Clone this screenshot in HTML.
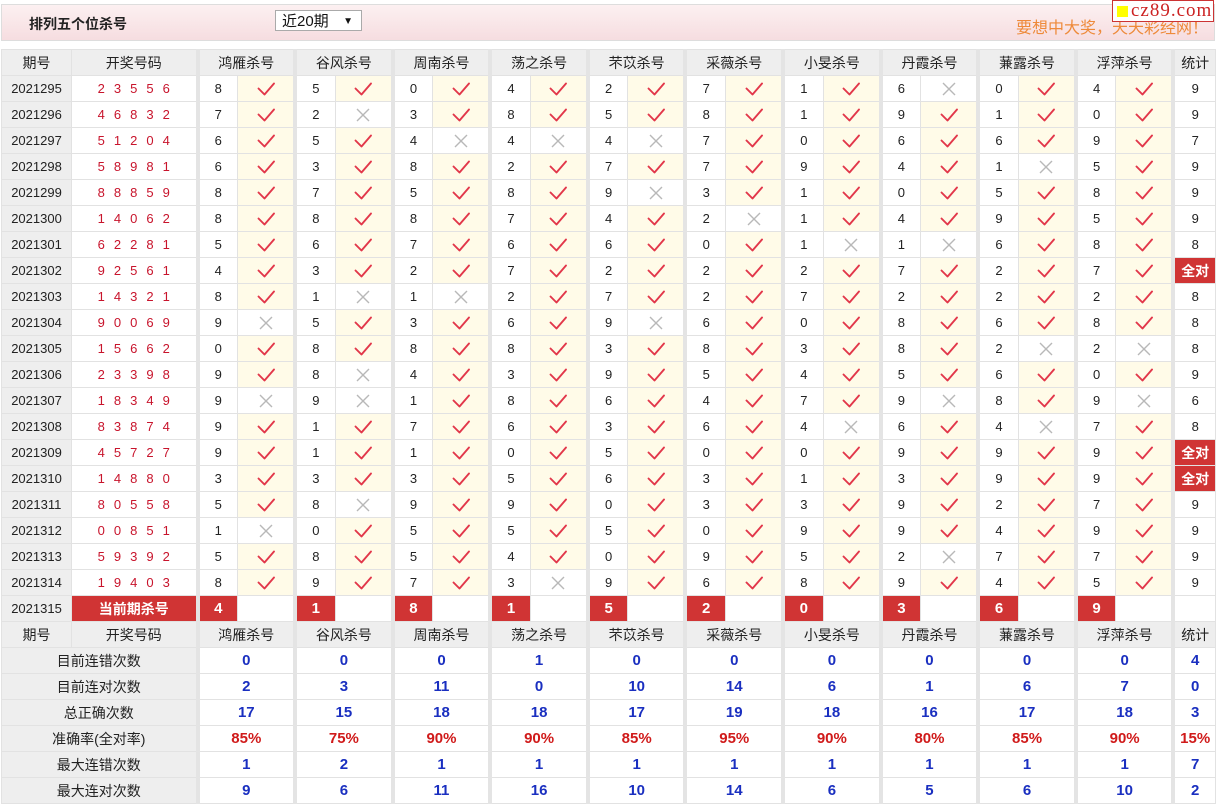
<!DOCTYPE html>
<html><head><meta charset="utf-8">
<style>
body{margin:0;width:1216px;height:807px;background:#fff;font-family:"Liberation Sans","Noto Sans CJK SC",sans-serif;position:relative;overflow:hidden}
.hd{position:absolute;left:1px;top:4px;width:1212px;height:35px;border:1px solid #ddd;background:linear-gradient(#fcf0f1,#f6dde0)}
.tt{position:absolute;left:27px;top:9px;font-size:14px;font-weight:bold;color:#222}
.sel{position:absolute;left:273px;top:5px;width:87px;height:21px;border:1px solid #aaa;background:#fff;font-size:15px;line-height:21px;box-sizing:border-box;padding-left:6px;color:#111}
.sel b{position:absolute;right:8px;top:0;font-size:10px}
.slog{position:absolute;right:6px;top:9px;font-size:16px;color:#ee8a3a}
.logo{position:absolute;left:1112px;top:0;width:102px;height:22px;background:#fff;border:1px solid #c33;box-sizing:border-box;font-family:"Liberation Serif",serif;font-size:19px;color:#c22;line-height:20px;padding-left:18px;letter-spacing:1px}
.logo i{position:absolute;left:4px;top:5px;width:11px;height:11px;background:#ff0}
table{position:absolute;left:1px;top:49px;border-collapse:collapse;table-layout:fixed;width:1214px;font-size:13px}
td{height:25px;border:1px solid #e2e2e2;text-align:center;padding:0;color:#222;white-space:nowrap;overflow:hidden}
.h td{background:#eee;font-size:14px}
.h td.g{border-left:4px solid #e4e4e4}
td.p{background:#eee;font-size:13px}
td.k{color:#c8142c;letter-spacing:9px;padding-left:9px;font-size:13px}
td.n{border-left:4px solid #e4e4e4}
td.y{background:#fffbe8}
td.s{border-left:4px solid #e4e4e4}
td.q{background:#d03434;color:#fff;font-weight:bold;font-size:14px}
td.c{background:#d03434;color:#fff;font-weight:bold;font-size:15px}
.st td{font-weight:bold;color:#1a2fc0;font-size:15px}
.st td.l{background:#eee;font-weight:normal;color:#222;font-size:14px;border-right:4px solid #e4e4e4}
.st td.r{color:#d01a1a}
svg.i{width:22px;height:18px;vertical-align:middle}
</style></head><body>
<svg width="0" height="0" style="position:absolute"><defs>
<symbol id="v" viewBox="0 0 22 18"><path d="M3.5 8.5 L9.5 14.5 L19 3.5" fill="none" stroke="#e2374a" stroke-width="1.9" stroke-linejoin="round" stroke-linecap="round"/></symbol>
<symbol id="x" viewBox="0 0 22 18"><path d="M5 3 L17 15 M17 3 L5 15" fill="none" stroke="#b8b8b8" stroke-width="1.4"/></symbol>
</defs></svg>
<div class="hd"><div class="tt">排列五个位杀号</div><div class="sel">近20期<b>▼</b></div><div class="slog">要想中大奖，天天彩经网！</div></div>
<div class="logo"><i></i>cz89.com</div>
<table>
<colgroup><col style="width:70px"><col style="width:126px">
<col style="width:40px"><col style="width:57.6px"><col style="width:40px"><col style="width:57.6px"><col style="width:40px"><col style="width:57.6px"><col style="width:40px"><col style="width:57.6px"><col style="width:40px"><col style="width:57.6px"><col style="width:40px"><col style="width:57.6px"><col style="width:40px"><col style="width:57.6px"><col style="width:40px"><col style="width:57.6px"><col style="width:40px"><col style="width:57.6px"><col style="width:40px"><col style="width:57.6px">
<col style="width:42px"></colgroup>
<tbody id="b">
<tr class="h"><td>期号</td><td>开奖号码</td><td colspan="2" class="g">鸿雁杀号</td><td colspan="2" class="g">谷风杀号</td><td colspan="2" class="g">周南杀号</td><td colspan="2" class="g">荡之杀号</td><td colspan="2" class="g">芣苡杀号</td><td colspan="2" class="g">采薇杀号</td><td colspan="2" class="g">小旻杀号</td><td colspan="2" class="g">丹霞杀号</td><td colspan="2" class="g">蒹露杀号</td><td colspan="2" class="g">浮萍杀号</td><td class="g">统计</td></tr>
</tbody>
</table>
<script>
var R=[["2021295","23556","8+5+0+4+2+7+1+6-0+4+","9"],
["2021296","46832","7+2-3+8+5+8+1+9+1+0+","9"],
["2021297","51204","6+5+4-4-4-7+0+6+6+9+","7"],
["2021298","58981","6+3+8+2+7+7+9+4+1-5+","9"],
["2021299","88859","8+7+5+8+9-3+1+0+5+8+","9"],
["2021300","14062","8+8+8+7+4+2-1+4+9+5+","9"],
["2021301","62281","5+6+7+6+6+0+1-1-6+8+","8"],
["2021302","92561","4+3+2+7+2+2+2+7+2+7+","全对"],
["2021303","14321","8+1-1-2+7+2+7+2+2+2+","8"],
["2021304","90069","9-5+3+6+9-6+0+8+6+8+","8"],
["2021305","15662","0+8+8+8+3+8+3+8+2-2-","8"],
["2021306","23398","9+8-4+3+9+5+4+5+6+0+","9"],
["2021307","18349","9-9-1+8+6+4+7+9-8+9-","6"],
["2021308","83874","9+1+7+6+3+6+4-6+4-7+","8"],
["2021309","45727","9+1+1+0+5+0+0+9+9+9+","全对"],
["2021310","14880","3+3+3+5+6+3+1+3+9+9+","全对"],
["2021311","80558","5+8-9+9+0+3+3+9+2+7+","9"],
["2021312","00851","1-0+5+5+5+0+9+9+4+9+","9"],
["2021313","59392","5+8+5+4+0+9+5+2-7+7+","9"],
["2021314","19403","8+9+7+3-9+6+8+9+4+5+","9"]];
var h="";
R.forEach(function(r){h+='<tr><td class="p">'+r[0]+'</td><td class="k">'+r[1]+'</td>';
for(var i=0;i<10;i++){var n=r[2][i*2],ok=r[2][i*2+1]=="+";h+='<td class="n">'+n+'</td><td'+(ok?' class="y"':'')+'><svg class="i"><use href="#'+(ok?'v':'x')+'"/></svg></td>';}
h+=(r[3]=="全对"?'<td class="s q">全对</td>':'<td class="s">'+r[3]+'</td>')+'</tr>';});
h+='<tr><td class="p">2021315</td><td class="q">当前期杀号</td>';
"4181520369".split("").forEach(function(c){h+='<td class="n c">'+c+'</td><td></td>';});
h+='<td class="s"></td></tr>';
h+=document.querySelector("tr.h").outerHTML;
var S=[["目前连错次数",[0,0,0,1,0,0,0,0,0,0],"4"],["目前连对次数",[2,3,11,0,10,14,6,1,6,7],"0"],["总正确次数",[17,15,18,18,17,19,18,16,17,18],"3"],["准确率(全对率)",["85%","75%","90%","90%","85%","95%","90%","80%","85%","90%"],"15%"],["最大连错次数",[1,2,1,1,1,1,1,1,1,1],"7"],["最大连对次数",[9,6,11,16,10,14,6,5,6,10],"2"]];
S.forEach(function(s,j){var v=s[1];
h+='<tr class="st"><td class="l" colspan="2">'+s[0]+'</td>';v.forEach(function(x,i){h+='<td colspan="2"'+(j==3?' class="r"':'')+(i>0?' style="border-left:4px solid #e4e4e4"':'')+'>'+x+'</td>';});
h+='<td class="s'+(j==3?' r':'')+'">'+s[2]+'</td></tr>';});
document.getElementById("b").insertAdjacentHTML("beforeend",h);
</script>
</body></html>
